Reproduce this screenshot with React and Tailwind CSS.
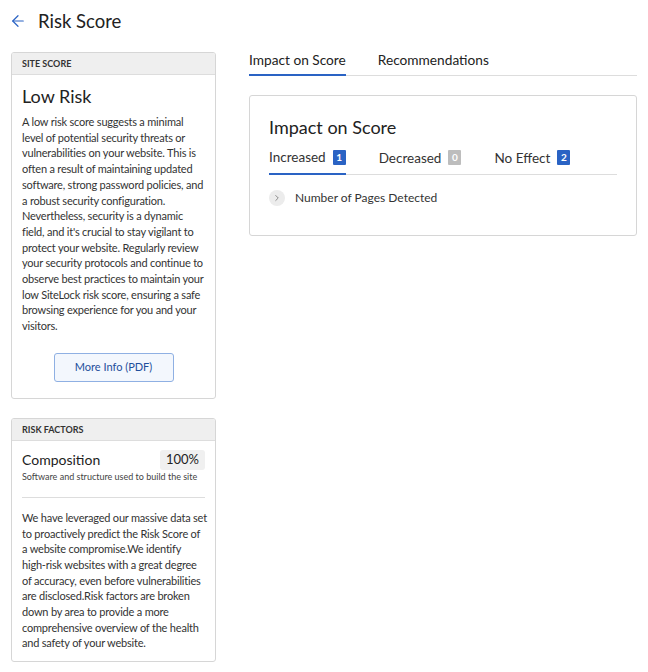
import { ArrowLeft, ChevronRight } from "lucide-react";

const font = { fontFamily: "Lato, 'Noto Sans', sans-serif" };

const siteScoreLines = [
  "A low risk score suggests a minimal",
  "level of potential security threats or",
  "vulnerabilities on your website. This is",
  "often a result of maintaining updated",
  "software, strong password policies, and",
  "a robust security configuration.",
  "Nevertheless, security is a dynamic",
  "field, and it's crucial to stay vigilant to",
  "protect your website. Regularly review",
  "your security protocols and continue to",
  "observe best practices to maintain your",
  "low SiteLock risk score, ensuring a safe",
  "browsing experience for you and your",
  "visitors.",
];

const riskFactorLines = [
  "We have leveraged our massive data set",
  "to proactively predict the Risk Score of",
  "a website compromise.We identify",
  "high-risk websites with a great degree",
  "of accuracy, even before vulnerabilities",
  "are disclosed.Risk factors are broken",
  "down by area to provide a more",
  "comprehensive overview of the health",
  "and safety of your website.",
];

function CardHeader({ children }) {
  return (
    <div className="h-[22px] flex items-center px-[10px] bg-[#efefef] border-b border-[#dddddd] text-[9px] font-bold uppercase text-[#333]">
      {children}
    </div>
  );
}

function Lines({ lines }) {
  return (
    <p className="text-[11px] leading-[15.7px] tracking-[-0.2px] text-[#333]">
      {lines.map((l) => (
        <span key={l} className="block whitespace-nowrap">
          {l}
        </span>
      ))}
    </p>
  );
}

function Badge({ value, muted }) {
  return (
    <span
      className={
        "w-[13px] h-[15px] text-white text-[10px] font-bold flex items-center justify-center rounded-[1px] " +
        (muted ? "bg-[#bdbdbd]" : "bg-[#2a63c4]")
      }
    >
      {value}
    </span>
  );
}

export default function App() {
  return (
    <div className="bg-white text-[#333] px-[11px] pt-[8px] w-[648px] h-[672px]" style={font}>
      {/* Title */}
      <div className="flex items-center h-[26px]">
        <ArrowLeft size={18} strokeWidth={1.6} className="text-[#2a63c4] -ml-[2px]" />
        <h1 className="ml-[11px] text-[18.5px] text-[#222] leading-none">Risk Score</h1>
      </div>

      <div className="flex gap-[33px] mt-[18px]">
        {/* Left column */}
        <div className="w-[205px] flex flex-col gap-[19px]">
          <div className="rounded-[3px] border border-[#d6d6d6] bg-white overflow-hidden">
            <CardHeader>Site Score</CardHeader>
            <div className="px-[10px] pt-[9px] pb-[16px]">
              <h2 className="text-[18px] text-[#222] leading-[24px]">Low Risk</h2>
              <div className="mt-[6px]">
                <Lines lines={siteScoreLines} />
              </div>
              <div className="flex justify-center mt-[19px]">
                <button className="w-[120px] h-[29px] rounded-[3px] border border-[#8fb0e3] bg-[#f3f7fd] text-[11px] text-[#1f4f9c]">
                  More Info (PDF)
                </button>
              </div>
            </div>
          </div>

          <div className="rounded-[3px] border border-[#d6d6d6] bg-white overflow-hidden">
            <CardHeader>Risk Factors</CardHeader>
            <div className="px-[10px] pt-[9px] pb-[10px]">
              <div className="flex items-center justify-between">
                <div className="text-[14px] text-[#222] leading-[20px]">Composition</div>
                <span className="bg-[#f0f0f0] rounded-[3px] px-[6px] h-[20px] flex items-center text-[13px] text-[#222]">
                  100%
                </span>
              </div>
              <div className="text-[9px] text-[#444] leading-[12px] mt-[1px] whitespace-nowrap">
                Software and structure used to build the site
              </div>
              <div className="border-t border-[#dddddd] mt-[14px] mb-[12px]" />
              <Lines lines={riskFactorLines} />
            </div>
          </div>
        </div>

        {/* Right column */}
        <div className="w-[390px]">
          <div className="flex border-b border-[#dddddd] h-[24px] text-[13.7px] text-[#222]">
            <div className="border-b-2 border-[#2a63c4] -mb-px leading-[16px]">Impact on Score</div>
            <div className="ml-[32px] leading-[16px]">Recommendations</div>
          </div>

          <div className="mt-[19px] rounded-[3px] border border-[#d6d6d6] px-[19px] pt-[19px] pb-[28px]">
            <h3 className="text-[18px] text-[#222] leading-[24px]">Impact on Score</h3>
            <div className="mt-[8px] flex border-b border-[#dddddd] text-[13.5px] text-[#333]">
              <div className="flex items-center gap-[7px] pb-[6px] border-b-2 border-[#2a63c4] -mb-px">
                Increased
                <Badge value="1" />
              </div>
              <div className="flex items-center gap-[7px] pb-[6px] ml-[33px]">
                Decreased
                <Badge value="0" muted />
              </div>
              <div className="flex items-center gap-[7px] pb-[6px] ml-[33px]">
                No Effect
                <Badge value="2" />
              </div>
            </div>
            <div className="flex items-center mt-[14px]">
              <span className="w-[16px] h-[16px] rounded-full bg-[#ececec] flex items-center justify-center">
                <ChevronRight size={10} strokeWidth={2} className="text-[#777]" />
              </span>
              <span className="ml-[10px] text-[12px] text-[#333]">Number of Pages Detected</span>
            </div>
          </div>
        </div>
      </div>
    </div>
  );
}
